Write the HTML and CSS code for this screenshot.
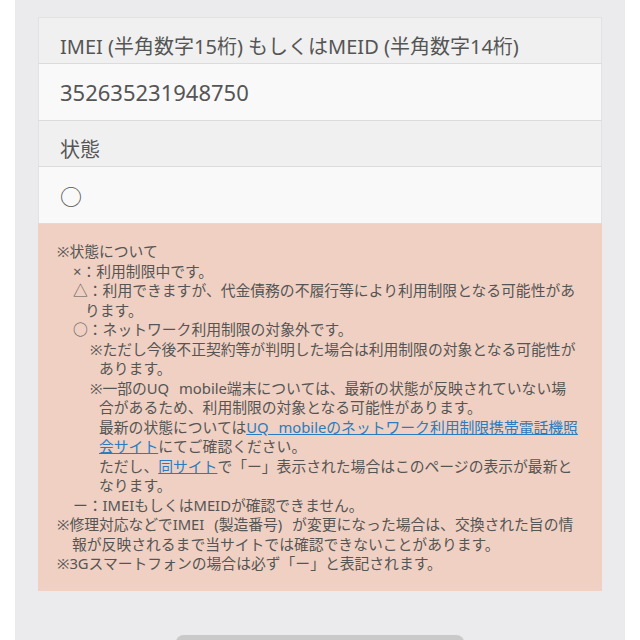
FILE: index.html
```html
<!DOCTYPE html>
<html lang="ja">
<head>
  <meta charset="UTF-8">
  <meta name="viewport" content="width=device-width, initial-scale=1.0">
  <title>ネットワーク利用制限携帯電話機照会</title>
  <link rel="stylesheet" href="styles.css">
</head>
<body>
  <div class="contenido">
    <table class="resultado">
      <tr><th>IMEI (半角数字15桁) もしくはMEID (半角数字14桁)</th></tr>
      <tr><td>352635231948750</td></tr>
      <tr><th>状態</th></tr>
      <tr><td>○</td></tr>
    </table>

    <div class="notas">
      <p class="n0">※状態について</p>
      <p class="n1">×：利用制限中です。</p>
      <p class="n1">△：利用できますが、代金債務の不履行等により利用制限となる可能性があります。</p>
      <p class="n1">○：ネットワーク利用制限の対象外です。</p>
      <p class="n2">※ただし今後不正契約等が判明した場合は利用制限の対象となる可能性があります。</p>
      <p class="n2">※一部のUQ mobile端末については、最新の状態が反映されていない場合があるため、利用制限の対象となる可能性があります。</p>
      <p class="n3">最新の状態については<a href="#">UQ mobileのネットワーク利用制限携帯電話機照会サイト</a>にてご確認ください。</p>
      <p class="n3">ただし、<a href="#">同サイト</a>で「ー」表示された場合はこのページの表示が最新となります。</p>
      <p class="n1">ー：IMEIもしくはMEIDが確認できません。</p>
      <p class="n0">※修理対応などでIMEI (製造番号) が変更になった場合は、交換された旨の情報が反映されるまで当サイトでは確認できないことがあります。</p>
      <p class="n0">※3Gスマートフォンの場合は必ず「ー」と表記されます。</p>
    </div>

    <div class="acciones">
      <button type="button">戻る</button>
    </div>
  </div>
</body>
</html>
```

FILE: styles.css
```css
body {
  margin: 0;
  background: #fff;
  font-family: "Noto Sans", "Noto Sans CJK JP", sans-serif;
  color: #555;
}
.contenido {
  margin: 0 15px;
  background: #ebebed;
  padding: 17px 23px 0;
  min-height: 700px;
}
.resultado {
  width: 100%;
  border-collapse: collapse;
  border: 1px solid #e2e2e2;
}
.resultado th, .resultado td {
  text-align: left;
  font-weight: normal;
  padding: 0 21px;
  border-bottom: 1px solid #dcdcdc;
}
.resultado th {
  background: #f0f0f0;
  font-size: 20px;
  height: 35px;
  padding-top: 10px;
}
.resultado td {
  background: #f9f9f9;
  font-size: 22px;
  height: 56px;
}
.notas {
  background: #efd0c2;
  padding: 18px 23px 17px 19px;
  font-size: 14.8px;
  line-height: 19.5px;
  word-spacing: 6px;
}
.notas p {
  margin: 0;
}
.notas .n0 {
  padding-left: 15px;
  text-indent: -15px;
}
.notas .n1 {
  margin-left: 16px;
  padding-left: 12px;
  text-indent: -12px;
}
.notas .n2 {
  margin-left: 33px;
  padding-left: 9px;
  text-indent: -9px;
}
.notas .n3 {
  margin-left: 42px;
}
.notas a {
  color: #2a7cc0;
}
.acciones {
  text-align: center;
  padding-top: 44px;
}
.acciones button {
  width: 288px;
  height: 48px;
  border: none;
  border-radius: 8px;
  background: #c9c9c9;
  box-shadow: 0 1px 2px rgba(0,0,0,0.2);
  color: #fff;
  font-size: 16px;
  font-family: inherit;
  padding-top: 30px;
}
```
